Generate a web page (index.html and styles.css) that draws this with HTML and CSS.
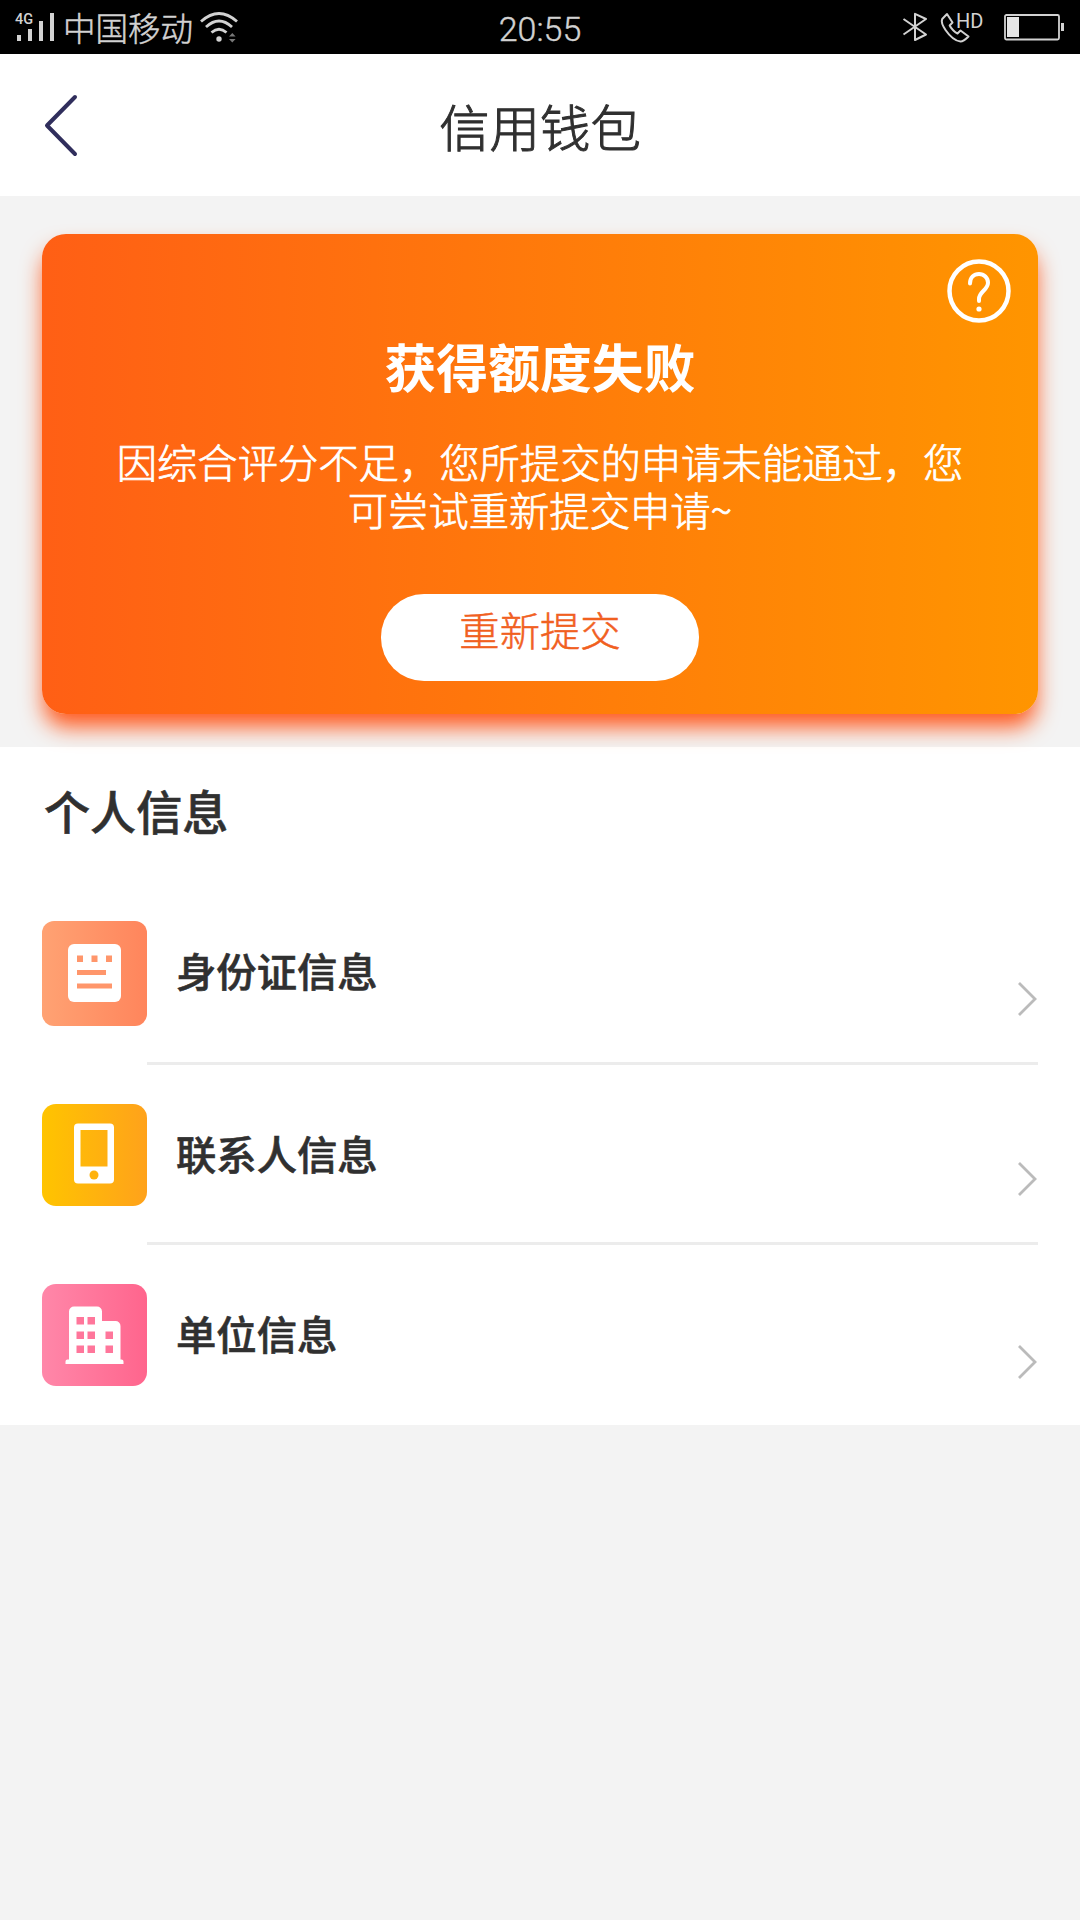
FILE: index.html
```html
<!DOCTYPE html>
<html lang="zh-CN">
<head>
<meta charset="utf-8">
<title>信用钱包</title>
<link rel="stylesheet" href="styles.css">
</head>
<body>
<div class="statusbar">
  <div class="status-left">
    <svg class="signal" width="40" height="30" viewBox="0 0 40 30">
      <text class="net" x="-1" y="11.500">4G</text>
      <path d="M1 23h4v6H1zM12 17h4v12h-4zM23 9h4v20h-4zM34 1h4v28h-4z" fill="#d2d2d2"/>
    </svg>
    <span class="carrier">中国移动</span>
    <svg class="wifi" width="38" height="32" viewBox="0 0 38 32">
      <g fill="none" stroke="#d2d2d2" stroke-width="2.8">
        <path d="M1 10.500Q19 -5.500 37 10.500"/><path d="M6 16Q19 4 32 16"/><path d="M11.500 21.500Q19 15 26.500 21.500"/>
      </g>
      <circle cx="19" cy="28" r="2.700" fill="#d2d2d2"/>
      <path d="M29 25.500l3.300-3.500 3.300 3.500zM29 28l3.300 3.500 3.300-3.500z" fill="#777"/>
    </svg>
  </div>
  <time class="clock">20:55</time>
  <div class="status-right">
    <svg class="bluetooth" width="26" height="30" viewBox="0 0 26 30">
      <path d="M1.500 7L24 22.500L13 28V1.800L24 7L1.500 22.500" fill="none" stroke="#d2d2d2" stroke-width="2" stroke-linejoin="round"/>
    </svg>
    <svg class="call" width="46" height="32" viewBox="0 0 46 32">
      <path d="M7 2L2.200 7C1.300 9 2.500 13.500 5.500 18C10 24.500 15 29 20.500 29.500C23 29.500 26 27 28.500 24.500L20.500 18.500L17.500 21.500C15 20.500 11 16.500 9.700 13.500L12.500 10.500Z" fill="none" stroke="#d2d2d2" stroke-width="2" stroke-linejoin="round"/>
      <text class="hd" x="16" y="16">HD</text>
    </svg>
    <svg class="battery" width="60" height="27" viewBox="0 0 60 27">
      <rect x="1" y="1" width="54" height="24.500" rx="1.500" fill="none" stroke="#d2d2d2" stroke-width="1.800"/>
      <path d="M3 3h12v20H3z" fill="#e6e6e6"/><path d="M57 9h3v8h-3z" fill="#d2d2d2"/>
    </svg>
  </div>
</div>
<header class="navbar">
  <svg class="back" width="36" height="64" viewBox="0 0 36 64"><path d="M33 4L5 32.500L33 61" fill="none" stroke="#302e5c" stroke-width="4" stroke-linecap="round" stroke-linejoin="round"/></svg>
  <h1 class="title">信用钱包</h1>
</header>
<section class="hero">
  <div class="card">
    <svg class="help" width="64" height="64" viewBox="0 0 64 64" fill="none" stroke="#fff" stroke-linecap="round">
      <circle cx="32" cy="32" r="29.500" stroke-width="4.500"/>
      <path d="M23 24.500C23 18.500 27 15 32 15C37 15 41 18.800 41 23.700C41 31 32 32.500 32 40V42" stroke-width="4"/>
      <circle cx="32" cy="50" r="2.600" fill="#fff" stroke="none"/>
    </svg>
    <h2 class="card-title">获得额度失败</h2>
    <p class="card-text">因综合评分不足，您所提交的申请未能通过，您可尝试重新提交申请~</p>
    <button class="resubmit">重新提交</button>
  </div>
</section>
<main class="info">
  <h2 class="info-title">个人信息</h2>
  <div class="row row-first">
    <svg class="tile" width="105" height="105" viewBox="0 0 105 105">
      <defs><linearGradient id="peach"><stop stop-color="#ffa273"/><stop offset="1" stop-color="#ff855c"/></linearGradient></defs>
      <rect width="105" height="105" rx="12" fill="url(#peach)"/>
      <rect x="26" y="23" width="53" height="58" rx="6" fill="#fff"/>
      <path d="M35 34.500h6v6.500h-6zM49.500 34.500h6v6.500h-6zM64 34.500h6v6.500h-6zM35 49h29v5H35zM35 62.500h35v5H35z" fill="#ff966b"/>
    </svg>
    <div class="row-body"><span class="label">身份证信息</span><svg class="chevron" width="20" height="36" viewBox="0 0 20 36"><path d="M2 2L18 18L2 34"/></svg></div>
  </div>
  <div class="row">
    <svg class="tile" width="105" height="102" viewBox="0 0 105 102">
      <defs><linearGradient id="amber"><stop stop-color="#ffc400"/><stop offset="1" stop-color="#ffa21b"/></linearGradient></defs>
      <rect width="105" height="102" rx="14" fill="url(#amber)"/>
      <path fill="#fff" fill-rule="evenodd" d="M36 19.500h32a4 4 0 0 1 4 4v52a4 4 0 0 1-4 4H36a4 4 0 0 1-4-4v-52a4 4 0 0 1 4-4zM38.500 26v36.500h27V26z"/>
      <circle cx="52" cy="71" r="4.500" fill="#ffb30e"/>
    </svg>
    <div class="row-body"><span class="label">联系人信息</span><svg class="chevron" width="20" height="36" viewBox="0 0 20 36"><path d="M2 2L18 18L2 34"/></svg></div>
  </div>
  <div class="row row-last">
    <svg class="tile" width="105" height="102" viewBox="0 0 105 102">
      <defs><linearGradient id="pink"><stop stop-color="#ff87a9"/><stop offset="1" stop-color="#ff658d"/></linearGradient></defs>
      <rect width="105" height="102" rx="14" fill="url(#pink)"/>
      <path fill="#fff" d="M27 75.500V27.500a5 5 0 0 1 5-5h23a5 5 0 0 1 5 5v9.500h13.500a5 5 0 0 1 5 5v33.500h1a2 2 0 0 1 2 2V80H23.500v-2.500a2 2 0 0 1 2-2z"/>
      <path fill="#ff769b" d="M34.500 33h7.500v7.500h-7.500zM45.500 33H53v7.500h-7.500zM34.500 47.500h7.500V55h-7.500zM45.500 47.500H53V55h-7.500zM63.500 47.500H71V55h-7.500zM34.500 61.500h7.500V69h-7.500zM45.500 61.500H53V69h-7.500zM63.500 61.500H71V69h-7.500z"/>
    </svg>
    <div class="row-body"><span class="label">单位信息</span><svg class="chevron" width="20" height="36" viewBox="0 0 20 36"><path d="M2 2L18 18L2 34"/></svg></div>
  </div>
</main>
</body>
</html>
```
FILE: styles.css
```css
* { box-sizing: border-box; margin: 0; padding: 0; }
body {
  min-height: 1920px;
  background: #f3f3f3;
  color: #303030;
  font-family: "Noto Sans CJK SC", sans-serif;
}
svg { display: block; flex: none; overflow: visible; }

.statusbar {
  display: grid;
  grid-template-columns: 1fr auto 1fr;
  height: 54px;
  padding: 0 16px;
  background: #000;
  color: #d2d2d2;
}
.status-left, .status-right { display: flex; align-items: flex-start; }
.status-right { justify-content: flex-end; padding-top: 12px; }
.signal { margin-top: 12px; }
.net { font: 500 14.5px Roboto, sans-serif; fill: #d2d2d2; }
.carrier { margin-left: 7px; font-size: 32.5px; font-weight: 300; line-height: 54px; -webkit-text-stroke: .5px; }
.wifi { margin: 11px 0 0 7px; }
.clock { font: 300 34px/59px Roboto, sans-serif; -webkit-text-stroke: .4px; }
.bluetooth { margin-right: 12px; }
.call { margin-right: 18px; }
.hd { font: 400 20px Roboto, sans-serif; fill: #d2d2d2; }
.battery { margin-top: 2px; }

.navbar {
  display: grid;
  grid-template-columns: 1fr auto 1fr;
  align-items: center;
  height: 142px;
  padding: 0 42px;
  background: #fff;
}
.title { padding-top: 2px; font-size: 50.4px; font-weight: 300; line-height: 72px; -webkit-text-stroke: 1px; }

.hero { height: 551px; padding: 38px 42px 33px; }
.card {
  position: relative;
  height: 480px;
  padding-top: 100px;
  border-radius: 24px;
  background: linear-gradient(90deg, #ff5f15, #ff9500);
  box-shadow: 0 14.4px 22px -2px #ff5a1f;
  color: #fff;
  text-align: center;
}
.help { position: absolute; top: 25px; right: 27px; }
.card-title { font-size: 51.84px; font-weight: 700; line-height: 64px; }
.card-text { margin: 39px 70px 0; font-size: 40.32px; font-weight: 300; line-height: 48px; word-break: break-all; -webkit-text-stroke: .7px; }
.resubmit {
  display: block;
  width: 318px;
  height: 87px;
  margin: 61px auto 0;
  padding-bottom: 17px;
  border: 0;
  border-radius: 43px;
  background: #fff;
  color: #f1601f;
  font: 300 40.32px/70px "Noto Sans CJK SC", sans-serif;
  -webkit-text-stroke: .5px;
}

.info { height: 678px; padding: 0 42px; background: #fff; }
.info-title { height: 138px; padding-left: 2px; font-size: 46.08px; font-weight: 500; line-height: 126px; -webkit-text-stroke: .6px; }
.row { display: flex; height: 180px; padding-top: 39px; }
.row-first { padding-top: 36px; }
.row-body {
  display: flex;
  flex: 1;
  justify-content: space-between;
  align-items: flex-start;
  border-bottom: 3px solid #ececec;
  padding: 0 1px 0 29px;
}
.row-last .row-body { border-bottom: 0; }
.label { font-size: 40.32px; font-weight: 500; line-height: 98px; -webkit-text-stroke: .6px; }
.chevron { margin-top: 57px; fill: none; stroke: #bbb; stroke-width: 2.8; }
.row-first .chevron { margin-top: 60px; }
.row-last .chevron { margin-top: 60px; }
```
